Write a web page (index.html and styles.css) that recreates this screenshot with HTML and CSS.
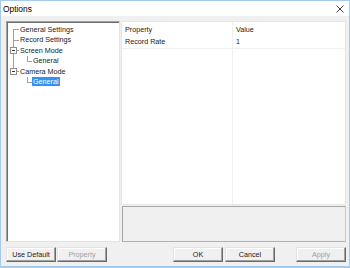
FILE: index.html
```html
<!DOCTYPE html>
<html>
<head>
<meta charset="utf-8">
<link rel="stylesheet" href="styles.css">
</head>
<body>
<div class="window">
  <div class="titlebar">
    <span class="title">Options</span>
    <svg class="close" width="8" height="8" viewBox="0 0 8 8"><path d="M0.5 0.5 L7.5 7.5 M7.5 0.5 L0.5 7.5" stroke="#2b2b2b" stroke-width="0.9" fill="none"/></svg>
  </div>
  <div class="client">
    <div class="main">
      <div class="tree">
        <div class="node"><span class="c l0 first"></span><span class="label">General Settings</span></div>
        <div class="node"><span class="c l0 tee"></span><span class="label">Record Settings</span></div>
        <div class="node"><span class="c l0 tee"><span class="box"></span></span><span class="label">Screen Mode</span></div>
        <div class="node"><span class="c l0 pipe"></span><span class="c l1 last"></span><span class="label">General</span></div>
        <div class="node"><span class="c l0 last"><span class="box"></span></span><span class="label">Camera Mode</span></div>
        <div class="node"><span class="c l0"></span><span class="c l1 last"></span><span class="label selected">General</span></div>
      </div>
      <div class="right">
        <div class="list">
          <div class="row head"><span class="cell k">Property</span><span class="cell">Value</span></div>
          <div class="row item"><span class="cell k">Record Rate</span><span class="cell">1</span></div>
          <div class="row fill"><span class="cell k"></span><span class="cell"></span></div>
        </div>
        <div class="desc"></div>
      </div>
    </div>
    <div class="buttons">
      <div class="group">
        <button class="btn">Use Default</button>
        <button class="btn disabled">Property</button>
      </div>
      <div class="group right-group">
        <button class="btn">OK</button>
        <button class="btn">Cancel</button>
        <button class="btn disabled apply">Apply</button>
      </div>
    </div>
  </div>
</div>
</body>
</html>
```
FILE: styles.css
```css
html, body {
  margin: 0;
  padding: 0;
  background: #ffffff;
}
body {
  font-family: "Liberation Sans", Arial, sans-serif;
  font-size: 7.2px;
  color: #1a1a1a;
}
.window {
  width: 350px;
  height: 268px;
  box-sizing: border-box;
  border: 1px solid #a3cbef;
  border-bottom-width: 2px;
  background: #f0f0f0;
  display: flex;
  flex-direction: column;
}
.titlebar {
  height: 15px;
  background: #ffffff;
  display: flex;
  align-items: center;
  justify-content: space-between;
  padding: 0 5px 0 2px;
  flex: none;
}
.title {
  font-size: 8.4px;
  color: #000;
}
.close {
  display: block;
  margin-top: 1px;
}
.client {
  flex: 1;
  display: flex;
  flex-direction: column;
  padding: 5px 3px 4px 5px;
  gap: 5px;
}
.main {
  flex: none;
  height: 221px;
  display: flex;
  gap: 1px;
}
.tree {
  width: 114px;
  box-sizing: border-box;
  background: #fff;
  border-style: solid;
  border-width: 1px;
  border-color: #a0a0a0 #e3e3e3 #e3e3e3 #a0a0a0;
  box-shadow: inset 1px 1px 0 #6e6e6e;
  padding-top: 2px;
  padding-left: 0;
}
.node {
  height: 10.5px;
  display: flex;
  align-items: center;
}
.c {
  position: relative;
  flex: none;
  height: 100%;
}
.c.l0 { width: 12px; }
.c.l1 { width: 13px; }
.c::before, .c::after {
  content: none;
  position: absolute;
}
.c.l0::before, .c.l0::after { left: 6px; }
.c.l1::before, .c.l1::after { left: 8px; }
.c.first::before, .c.tee::before, .c.pipe::before, .c.last::before {
  content: "";
  border-left: 1px solid #a0a0a0;
  width: 0;
}
.c.first::before { top: 50%; bottom: -1px; }
.c.tee::before { top: 0; bottom: 0; }
.c.pipe::before { top: 0; bottom: 0; }
.c.last::before { top: 0; bottom: 50%; }
.c.first::after, .c.tee::after, .c.last::after {
  content: "";
  top: 50%;
  right: 0;
  border-top: 1px solid #a0a0a0;
  height: 0;
}
.box {
  position: absolute;
  left: 3px;
  top: calc(50% - 3px);
  width: 5px;
  height: 5px;
  background: #fff;
  border: 1px solid #8e8e8e;
  z-index: 1;
}
.box::after {
  content: "";
  position: absolute;
  left: 1px;
  right: 1px;
  top: 2px;
  border-top: 1px solid #333;
}
.label {
  padding: 0 1px;
  line-height: 9px;
  height: 9px;
  white-space: nowrap;
  color: #1a1a1a;
}
.label.selected {
  background: #3393f3;
  color: #fff;
}
.right {
  flex: 1;
  display: flex;
  flex-direction: column;
  gap: 1px;
}
.list {
  height: 184px;
  box-sizing: border-box;
  background: #fff;
  border: 1px solid #e6e6e6;
  display: flex;
  flex-direction: column;
}
.row {
  display: grid;
  grid-template-columns: 111px 1fr;
}
.cell {
  padding-left: 3px;
  line-height: 12px;
  height: 12px;
  white-space: nowrap;
}
.cell.k {
  border-right: 1px solid #f0f0f0;
}
.row.head .cell {
  padding-top: 2px;
}
.row.item {
  border-bottom: 1px solid #f0f0f0;
}
.row.fill {
  flex: 1;
}
.row.fill .cell {
  height: auto;
}
.desc {
  flex: 1;
  margin-left: 1px;
  background: #f0f0f0;
  border: 1px solid #a6a6a6;
  border-right-color: #c8c8c8;
  border-bottom-color: #b0b0b0;
}
.buttons {
  height: 15px;
  flex: none;
  display: flex;
  justify-content: space-between;
}
.group {
  display: flex;
  gap: 1px;
}
.right-group {
  gap: 2px;
}
.btn {
  width: 50px;
  height: 15px;
  margin: 0;
  padding: 0;
  box-sizing: border-box;
  font-family: "Liberation Sans", Arial, sans-serif;
  font-size: 7.2px;
  color: #1a1a1a;
  background: #f0f0f0;
  border: 1px solid;
  border-color: #e3e3e3 #6a6a6a #6a6a6a #e3e3e3;
  box-shadow: inset -1px -1px 0 #a0a0a0, inset 1px 1px 0 #ffffff;
}
.btn.disabled {
  color: #a0a0a0;
}
.btn.apply {
  margin-left: 19px;
}
```
